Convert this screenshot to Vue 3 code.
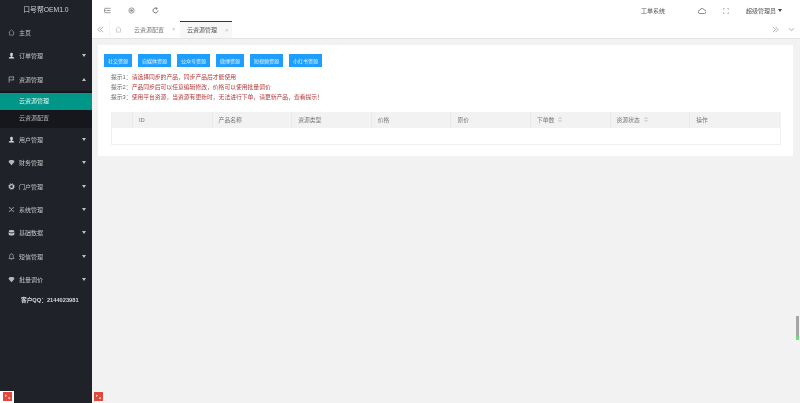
<script setup>
const menu = [
  { name: '订单管理', icon: 'user' },
  { name: '资源管理', icon: 'flag', open: true, subs: ['云资源管理', '云资源配置'] },
  { name: '用户管理', icon: 'user' },
  { name: '财务管理', icon: 'gem' },
  { name: '门户管理', icon: 'gear' },
  { name: '系统管理', icon: 'shuffle' },
  { name: '基础数据', icon: 'db' },
  { name: '短信管理', icon: 'bell' },
  { name: '批量调价', icon: 'gem' }
]
const buttons = ['社交资源', '自媒体资源', '公众号资源', '微博资源', '短视频资源', '小红书资源']
const hints = [
  ['提示1：', '请选择同步的产品，同步产品后才能使用'],
  ['提示2：', '产品同步后可以任意编辑修改，价格可以使用批量调价'],
  ['提示3：', '使用平台资源，当资源有更新时，无法进行下单，请更新产品，查看提示！']
]
const cols = [
  { t: '' }, { t: 'ID' }, { t: '产品名称' }, { t: '资源类型' }, { t: '价格' }, { t: '原价' },
  { t: '下单数', sort: true }, { t: '资源状态', sort: true }, { t: '操作' }
]
</script>

<template>
  <div class="app">
    <aside class="side">
      <div class="logo">口号帮OEM1.0</div>
      <div class="item">
        <svg class="ic" viewBox="0 0 16 16"><path d="M1.5 8 8 2l6.500 6M3.500 7v7h9V7" fill="none" stroke="#aeb0b4" stroke-width="1.300"/></svg>
        <span>主页</span>
      </div>
      <template v-for="m in menu" :key="m.name">
        <div class="item">
          <svg class="ic" viewBox="0 0 16 16">
            <path v-if="m.icon === 'user'" d="M8 1.500a3 3 0 0 1 3 3v2.500a3 3 0 0 1-1.500 2.500v1.500l4.500 1.500V15H2v-2.500l4.500-1.500V9.500A3 3 0 0 1 5 7V4.500a3 3 0 0 1 3-3z" fill="#d4d5d7"/>
            <path v-else-if="m.icon === 'flag'" d="M2.500 15V2h11l-2 3.500 2 3.500h-11" fill="none" stroke="#d4d5d7" stroke-width="1.400"/>
            <path v-else-if="m.icon === 'gem'" d="M4 2.500h8l3 4-7 8-7-8z" fill="#b4b6b9"/>
            <g v-else-if="m.icon === 'gear'"><circle cx="8" cy="8" r="4.500" fill="none" stroke="#c4c5c8" stroke-width="3"/><circle cx="8" cy="8" r="7" fill="none" stroke="#c4c5c8" stroke-width="1.500" stroke-dasharray="2.500 3"/></g>
            <path v-else-if="m.icon === 'shuffle'" d="M2 4h3l6 8h3M2 12h3l6-8h3" fill="none" stroke="#c4c5c8" stroke-width="1.600"/>
            <g v-else-if="m.icon === 'db'"><ellipse cx="8" cy="5" rx="6.500" ry="3" fill="#c4c5c8"/><path d="M1.500 7v5c0 1.600 3 3 6.500 3s6.500-1.400 6.500-3V7C14 9 11 10 8 10S2 9 1.500 7z" fill="#c4c5c8"/></g>
            <path v-else d="M8 2a4 4 0 0 1 4 4v4l2 2.500H2L4 10V6a4 4 0 0 1 4-4zM6.500 14.500h3" fill="none" stroke="#c4c5c8" stroke-width="1.400"/>
          </svg>
          <span>{{ m.name }}</span>
          <i class="caret" :class="{ up: m.open }"></i>
        </div>
        <div v-if="m.subs" class="subs">
          <div v-for="(s, i) in m.subs" :key="s" class="sub" :class="{ active: i === 0 }">{{ s }}</div>
        </div>
      </template>
      <div class="qq">客户QQ：2144023981</div>
      <div class="stamp stamp-a"><b></b></div>
    </aside>

    <main class="main">
      <header class="top">
        <svg class="tool" viewBox="0 0 16 16"><path d="M1 3h14M6 8h9M1 13h14M1 5.500 4 8l-3 2.500z" fill="none" stroke="#555" stroke-width="1.300"/></svg>
        <svg class="tool" viewBox="0 0 16 16"><circle cx="8" cy="8" r="6" fill="none" stroke="#666" stroke-width="1.500"/><circle cx="8" cy="8" r="3" fill="#888"/></svg>
        <svg class="tool" viewBox="0 0 16 16"><path d="M13.500 8A5.500 5.500 0 1 1 11 3.400M9.500 1l2.500 2.500L9 5.500" fill="none" stroke="#444" stroke-width="1.700"/></svg>
        <span class="grow"></span>
        <span class="ticket">工单系统</span>
        <svg class="cloud" viewBox="0 0 16 16"><path d="M4 13a3.500 3.500 0 0 1 0-7 4.500 4.500 0 0 1 8.500 0 3.500 3.500 0 0 1 0 7z" fill="none" stroke="#8a8a8a" stroke-width="2"/></svg>
        <svg class="full" viewBox="0 0 16 16"><path d="M1 5V1h4M11 1h4v4M15 11v4h-4M5 15H1v-4" fill="none" stroke="#888" stroke-width="1.400"/></svg>
        <span class="admin">超级管理员</span>
        <i class="caret dark"></i>
      </header>

      <nav class="tabs">
        <svg class="nav-ic" viewBox="0 0 16 16"><path d="M8 2 2 8l6 6M14 2 8 8l6 6" fill="none" stroke="#777" stroke-width="1.300"/></svg>
        <span class="home">
          <svg viewBox="0 0 16 16"><path d="M1.500 8 8 2l6.500 6M3.500 7v7h9V7" fill="none" stroke="#a8a8a8" stroke-width="1.200"/></svg>
        </span>
        <span class="tab">云资源配置<em>×</em></span>
        <span class="tab on">云资源管理<em>×</em></span>
        <span class="grow"></span>
        <svg class="nav-ic r" viewBox="0 0 16 16"><path d="m2 2 6 6-6 6M8 2l6 6-6 6" fill="none" stroke="#777" stroke-width="1.300"/></svg>
        <svg class="nav-ic r" viewBox="0 0 16 16"><path d="m2 5 6 6 6-6" fill="none" stroke="#777" stroke-width="1.300"/></svg>
      </nav>

      <section class="body">
        <div class="card">
          <div class="btns">
            <button v-for="b in buttons" :key="b" type="button">{{ b }}</button>
          </div>
          <div class="hints">
            <p v-for="h in hints" :key="h[0]"><span>{{ h[0] }}</span><span class="red">{{ h[1] }}</span></p>
          </div>
          <div class="table">
            <div class="thead">
              <div v-for="(c, i) in cols" :key="i" class="th">
                {{ c.t }}<svg v-if="c.sort" class="sort" viewBox="0 0 8 10"><path d="M1 4l3-3 3 3M1 6l3 3 3-3" fill="none" stroke="#888" stroke-width="1"/></svg>
              </div>
            </div>
            <div class="tbody"></div>
          </div>
        </div>
      </section>
      <div class="stamp stamp-b"><b></b></div>
      <div class="scroll"></div>
    </main>
  </div>
</template>

<style>
html, body { margin: 0; overflow: hidden; }
</style>

<style scoped>
.app {
  display: flex;
  width: 800px;
  height: 403px;
  overflow: hidden;
  font-family: "Liberation Sans", "Noto Sans CJK SC", sans-serif;
  font-size: 6px;
  color: #666;
  filter: blur(0.3px);
}
.side {
  position: relative;
  width: 92px;
  flex: none;
  background: #20222a;
  color: #c2c2c2;
}
.logo {
  height: 21px;
  line-height: 20px;
  text-align: center;
  font-size: 6.800px;
  color: #d0d1d3;
}
.item {
  display: flex;
  align-items: center;
  height: 23.3px;
  padding: 0 6px 0 8px;
  font-size: 6px;
}
.ic { width: 7px; height: 7px; margin-right: 4px; flex: none; }
.item span { flex: 1; }
.caret {
  width: 0;
  height: 0;
  border-left: 2.5px solid transparent;
  border-right: 2.5px solid transparent;
  border-top: 3px solid #c2c2c2;
}
.caret.up { border-top: 0; border-bottom: 3px solid #c2c2c2; }
.caret.dark { border-top-color: #444; margin-left: 2px; margin-right: 18px; }
.subs { background: #16171c; padding: 2px 0 1px; }
.sub {
  height: 17px;
  line-height: 17px;
  padding-left: 19px;
  font-size: 6px;
  color: #b5b6b8;
}
.sub.active { background: #009688; color: #e2f2f0; }
.qq {
  margin-top: 3px;
  padding-left: 21px;
  height: 12px;
  line-height: 12px;
  font-size: 5.700px;
  font-weight: bold;
  color: #d8d8da;
}
.main {
  position: relative;
  flex: 1;
  display: flex;
  flex-direction: column;
  min-width: 0;
  background: #f2f2f2;
}
.top {
  display: flex;
  align-items: center;
  height: 21px;
  flex: none;
  padding-left: 12px;
  background: #fff;
}
.tool { width: 7px; height: 7px; margin-right: 17px; }
.grow { flex: 1; }
.ticket { margin-right: 33px; font-size: 6px; color: #555; }
.cloud { width: 8px; height: 8px; margin-right: 17px; }
.full { width: 6px; height: 6px; margin-right: 17px; }
.admin { font-size: 6px; color: #555; }
.tabs {
  display: flex;
  align-items: center;
  height: 16.500px;
  flex: none;
  background: #fff;
  border-bottom: 1px solid #e4e4e4;
}
.nav-ic { width: 7px; height: 7px; margin: 0 5px; flex: none; }
.nav-ic.r { margin: 0 5px 0 4px; }
.home {
  display: flex;
  align-items: center;
  justify-content: center;
  width: 18px;
  height: 100%;
  border-left: 1px solid #f5f5f5;
  box-sizing: border-box;
}
.home svg { width: 7px; height: 7px; }
.tab {
  position: relative;
  display: flex;
  align-items: center;
  gap: 8px;
  height: 100%;
  box-sizing: border-box;
  padding: 0 4px 0 7px;
  width: 53px;
  font-size: 6px;
  color: #777;
  white-space: nowrap;
}
.tab em { font-style: normal; color: #bbb; font-size: 6px; }
.tab.on { background: #f7f7f7; border-top: 1px solid #33363d; color: #555; width: 52px; }
.body { padding: 6px 7px 0 6px; }
.card {
  height: 111px;
  box-sizing: border-box;
  padding: 9px 12px 0 6px;
  background: #fff;
}
.btns { display: flex; gap: 6px; }
button {
  height: 13px;
  padding: 0 4px;
  border: 0;
  background: #1e9fff;
  color: #e8f5ff;
  font: 5px "Liberation Sans", "Noto Sans CJK SC", sans-serif;
  white-space: nowrap;
}
.hints { margin: 5.500px 0 0 7px; }
.hints p { margin: 0; height: 10px; line-height: 10px; font-size: 5.800px; white-space: nowrap; }
.red { color: #b23a3a; }
.table {
  margin: 9.500px 0 0 7px;
  height: 33px;
  box-sizing: border-box;
  border: 1px solid #f0f0f0;
  border-top: 0;
}
.thead {
  display: grid;
  grid-template-columns: 21px repeat(7, 79.600px) 1fr;
  height: 16px;
  background: #f2f2f2;
}
.th {
  display: flex;
  align-items: center;
  padding-left: 6px;
  font-size: 5.800px;
  color: #777;
  border-right: 1px solid #eaeaea;
}
.th:last-child { border-right: 0; }
.sort { width: 4px; height: 5px; margin-left: 4px; }
.stamp {
  position: absolute;
  bottom: 0;
  width: 14px;
  height: 11px;
  display: flex;
  align-items: flex-start;
  justify-content: center;
  padding-top: 1px;
  background: #fff;
}
.stamp b {
  width: 9px;
  height: 9px;
  background: radial-gradient(circle at 30% 40%, #f4b3a8 0 12%, transparent 14%), radial-gradient(circle at 70% 70%, #f4b3a8 0 12%, transparent 14%), #e2483c;
}
.stamp-a { left: 0; }
.stamp-b { left: 0; width: 13px; background: #f7f7f7; }
.scroll {
  position: absolute;
  left: 704px;
  top: 316px;
  width: 2.500px;
  height: 24px;
  background: linear-gradient(#a6a6a6 0 80%, #6fd884 88%);
}
</style>
